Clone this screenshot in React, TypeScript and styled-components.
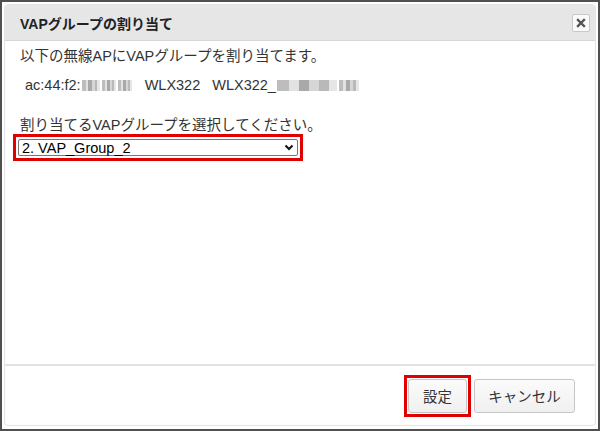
import React from "react";
import styled, { createGlobalStyle } from "styled-components";

const Global = createGlobalStyle`
  html, body { margin: 0; padding: 0; background: #fff; }
  body { font-family: "Liberation Sans", "Noto Sans CJK JP", sans-serif; color: #333; }
`;

const Frame = styled.div`
  width: 600px;
  height: 431px;
  box-sizing: border-box;
  border: 2px solid #505050;
  background: #fff;
  padding: 2px 2px 3px 2px;
`;

const Modal = styled.div`
  height: 100%;
  box-sizing: border-box;
  border: 1px solid #e4e4e4;
  border-radius: 4px;
  display: flex;
  flex-direction: column;
  overflow: hidden;
`;

const Header = styled.div`
  height: 36px;
  flex: none;
  box-sizing: border-box;
  background: #e6e6e6;
  border-bottom: 1px solid #d6d6d6;
  display: flex;
  align-items: center;
  justify-content: space-between;
  padding: 0 5px 0 15px;
`;

const Title = styled.h1`
  margin: 0;
  font-size: 14px;
  font-weight: bold;
  color: #222;
`;

const CloseButton = styled.button`
  width: 18px;
  height: 18px;
  padding: 0;
  background: #fafafa;
  border: 1px solid #c8c8c8;
  border-radius: 2px;
  display: flex;
  align-items: center;
  justify-content: center;
`;

const Body = styled.div`
  flex: 1;
  padding: 5px 15px 0 8px;
  font-size: 14.5px;
  color: #333;
`;

const Line = styled.p<{ $indent?: number; $top?: number }>`
  margin: ${(p) => p.$top ?? 0}px 0 0 ${(p) => p.$indent ?? 7}px;
  height: 20px;
  line-height: 20px;
  display: flex;
  align-items: center;
  white-space: nowrap;
`;

const Mosaic = styled.span<{ $w: number }>`
  display: inline-block;
  width: ${(p) => p.$w}px;
  height: 11px;
  margin: 0 1px;
  background: linear-gradient(90deg, #bdbdbd 0 20%, #e2e2e2 20% 36%, #a9a9a9 36% 54%, #d6d6d6 54% 70%, #b9b9b9 70% 86%, #e6e6e6 86%);
  filter: blur(0.7px);
`;

const Gap = styled.span`
  display: inline-block;
  width: 12px;
`;

const RedBox = styled.div<{ $pad: number; $top?: number }>`
  display: inline-flex;
  border: 3px solid #e00000;
  padding: ${(p) => p.$pad}px;
  margin-top: ${(p) => p.$top ?? 0}px;
  box-sizing: border-box;
`;

const Select = styled.div`
  width: 280px;
  height: 17px;
  box-sizing: border-box;
  border: 1px solid #767676;
  border-radius: 2px;
  background: #fff;
  display: flex;
  align-items: center;
  justify-content: space-between;
  padding: 0 3px 0 3px;
  font-size: 14.5px;
  color: #000;
`;

const Footer = styled.div`
  height: 61px;
  flex: none;
  box-sizing: border-box;
  border-top: 2px solid #e2e2e2;
  display: flex;
  align-items: center;
  justify-content: flex-end;
  gap: 3px;
  padding: 0 20px 0 0;
`;

const Button = styled.button<{ $w: number }>`
  width: ${(p) => p.$w}px;
  height: 34px;
  padding: 0;
  white-space: nowrap;
  font-family: "Liberation Sans", "Noto Sans CJK JP", sans-serif;
  font-size: 14.5px;
  color: #333;
  background: linear-gradient(#fbfbfb, #f0f0f0);
  border: 1px solid #c6c6c6;
  border-radius: 3px;
`;

export default function App() {
  return (
    <>
      <Global />
      <Frame>
        <Modal>
          <Header>
            <Title>VAPグループの割り当て</Title>
            <CloseButton aria-label="close">
              <svg width="10" height="10" viewBox="0 0 10 10">
                <path d="M2 2 L8 8 M8 2 L2 8" stroke="#555" strokeWidth="2.4" strokeLinecap="square" />
              </svg>
            </CloseButton>
          </Header>
          <Body>
            <Line>以下の無線APにVAPグループを割り当てます。</Line>
            <Line $indent={12} $top={9}>
              ac:44:f2:<Mosaic $w={18} /><Mosaic $w={14} /><Mosaic $w={14} />
              <Gap />WLX322<Gap />WLX322_<Mosaic $w={60} /><Mosaic $w={20} />
            </Line>
            <Line $top={20}>割り当てるVAPグループを選択してください。</Line>
            <RedBox $pad={2} $top={-1}>
              <Select>
                <span>2. VAP_Group_2</span>
                <svg width="10" height="7" viewBox="0 0 10 7">
                  <path d="M1.5 1.5 L5 5 L8.5 1.5" fill="none" stroke="#111" strokeWidth="2" />
                </svg>
              </Select>
            </RedBox>
          </Body>
          <Footer>
            <RedBox $pad={1}>
              <Button $w={59}>設定</Button>
            </RedBox>
            <Button $w={101}>キャンセル</Button>
          </Footer>
        </Modal>
      </Frame>
    </>
  );
}
